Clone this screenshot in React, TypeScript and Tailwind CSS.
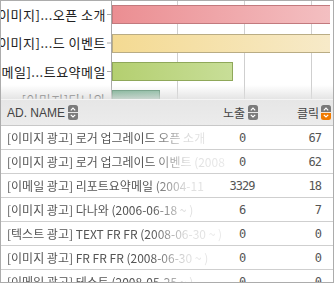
import React from "react";

const labels = [
  "[이미지]...오픈 소개",
  "[이미지]...드 이벤트",
  "[이메일]...트요약메일",
  "[이미지]다나와",
];

const bars = [
  { y: 4, w: 230, from: "#eb8e92", to: "#f4c2c4", stroke: "#c27a7e" },
  { y: 33, w: 230, from: "#f4da92", to: "#f7ebcc", stroke: "#b9ac84" },
  { y: 61, w: 120, from: "#b4cf70", to: "#c8de98", stroke: "#8fa85a" },
  { y: 89, w: 47, from: "#67a884", to: "#78b494", stroke: "#4d8a68" },
];

const rows = [
  { name: "[이미지 광고] 로거 업그레이드 오픈 소개", imp: "0", click: "67" },
  { name: "[이미지 광고] 로거 업그레이드 이벤트 (2008", imp: "0", click: "62" },
  { name: "[이메일 광고] 리포트요약메일 (2004-11", imp: "3329", click: "18" },
  { name: "[이미지 광고] 다나와 (2006-06-18 ~ )", imp: "6", click: "7" },
  { name: "[텍스트 광고] TEXT FR FR (2008-06-30 ~ )", imp: "0", click: "0" },
  { name: "[이미지 광고] FR FR FR (2008-06-30 ~ )", imp: "0", click: "0" },
  { name: "[이메일 광고] 테스트 (2008-05-25 ~ )", imp: "0", click: "0" },
];

function SortIcon({ active }: { active?: boolean }) {
  const low = active ? "#f07a00" : "#7a7a7a";
  return (
    <svg width="10" height="15" viewBox="0 0 10 15" className="shrink-0">
      <rect x="0" y="0" width="10" height="7.5" rx="2.5" fill="#7a7a7a" />
      <rect x="0" y="3" width="10" height="4.5" fill="#7a7a7a" />
      <rect x="0" y="7.5" width="10" height="7.5" rx="2.5" fill={low} />
      <rect x="0" y="7.5" width="10" height="4.5" fill={low} />
      <line x1="0" y1="7.5" x2="10" y2="7.5" stroke="#ffffff" strokeWidth="0.8" />
      <path d="M2.8 5.3 L5 3 L7.2 5.3" fill="none" stroke="#ffffff" strokeWidth="1.2" />
      <path d="M2.8 9.8 L5 12 L7.2 9.8" fill="none" stroke="#ffffff" strokeWidth="1.2" />
    </svg>
  );
}

export default function App() {
  return (
    <div className="w-[335px] h-[283px] overflow-hidden bg-white font-['Noto_Sans_CJK_KR','Noto_Sans',sans-serif]">
      <div className="w-[334px] h-[283px] border border-[#acacac] flex flex-col overflow-hidden">
        {/* CHART */}
        <div className="relative h-[98px] shrink-0 flex overflow-hidden">
          <div className="w-[110px] shrink-0 flex flex-col -mt-[1px]">
            {labels.map((l, i) => (
              <div key={i} className="h-[28.5px] shrink-0 flex items-center justify-end overflow-hidden">
                <span className="whitespace-nowrap text-[13px] tracking-[0.5px] leading-none text-[#222] pr-[5px]">
                  {l}
                </span>
              </div>
            ))}
          </div>
          <svg width="223" height="98" className="shrink-0 -ml-[4px]">
            <defs>
              {bars.map((b, i) => (
                <linearGradient key={i} id={"g" + i} x1="0" x2="1" y1="0" y2="0">
                  <stop offset="0" stopColor={b.from} />
                  <stop offset="1" stopColor={b.to} />
                </linearGradient>
              ))}
            </defs>
            <line x1="70.5" y1="0" x2="70.5" y2="98" stroke="#cfcfcf" />
            <line x1="137.5" y1="0" x2="137.5" y2="98" stroke="#cfcfcf" />
            <line x1="204.5" y1="0" x2="204.5" y2="98" stroke="#cfcfcf" />
            <line x1="4.5" y1="0" x2="4.5" y2="98" stroke="#a8a8a8" />
            {[13, 41.5, 70, 98].map((y) => (
              <line key={y} x1="0" y1={y + 0.5} x2="4" y2={y + 0.5} stroke="#a8a8a8" />
            ))}
            {bars.map((b, i) => (
              <rect
                key={i}
                x="5.5"
                y={b.y + 0.5}
                width={b.w}
                height="18"
                fill={"url(#g" + i + ")"}
                stroke={b.stroke}
              />
            ))}
          </svg>
          <div className="absolute left-0 right-0 bottom-0 h-[14px] bg-gradient-to-b from-white/0 to-[#dedede]/80" />
        </div>

        {/* TABLE */}
        <div className="flex flex-col text-[12px] text-[#555]">
          <div className="h-[27px] shrink-0 flex items-center bg-gradient-to-b from-[#e6e6e6] to-[#ececec] border-t border-[#f4f4f4] border-b border-b-[#c8c8c8]">
            <div className="w-[220px] pl-[6px] flex items-center gap-[3px] font-['Liberation_Sans',sans-serif] text-[#444] text-[12px]">
              <span>AD. NAME</span>
              <SortIcon />
            </div>
            <div className="w-[37px] flex items-center justify-end gap-[3px] text-[#444]">
              <span>노출</span>
              <SortIcon />
            </div>
            <div className="w-[73px] flex items-center justify-end gap-[2px] text-[#444]">
              <span>클릭</span>
              <SortIcon active />
            </div>
          </div>
          {rows.map((r, i) => (
            <div key={i} className="h-[24px] shrink-0 flex items-center border-b border-[#cfcfcf]">
              <div className="w-[226px] pl-[6px] overflow-hidden whitespace-nowrap [mask-image:linear-gradient(to_right,black_150px,rgba(0,0,0,0.2)_185px,rgba(0,0,0,0.12)_226px)]">
                {r.name}
              </div>
              <div className="w-[30px] text-center font-['DejaVu_Sans_Mono',monospace] text-[12px] tracking-[-1px]">
                {r.imp}
              </div>
              <div className="w-[64px] text-right font-['DejaVu_Sans_Mono',monospace] text-[12px] tracking-[-1px]">
                {r.click}
              </div>
            </div>
          ))}
        </div>
      </div>
    </div>
  );
}
